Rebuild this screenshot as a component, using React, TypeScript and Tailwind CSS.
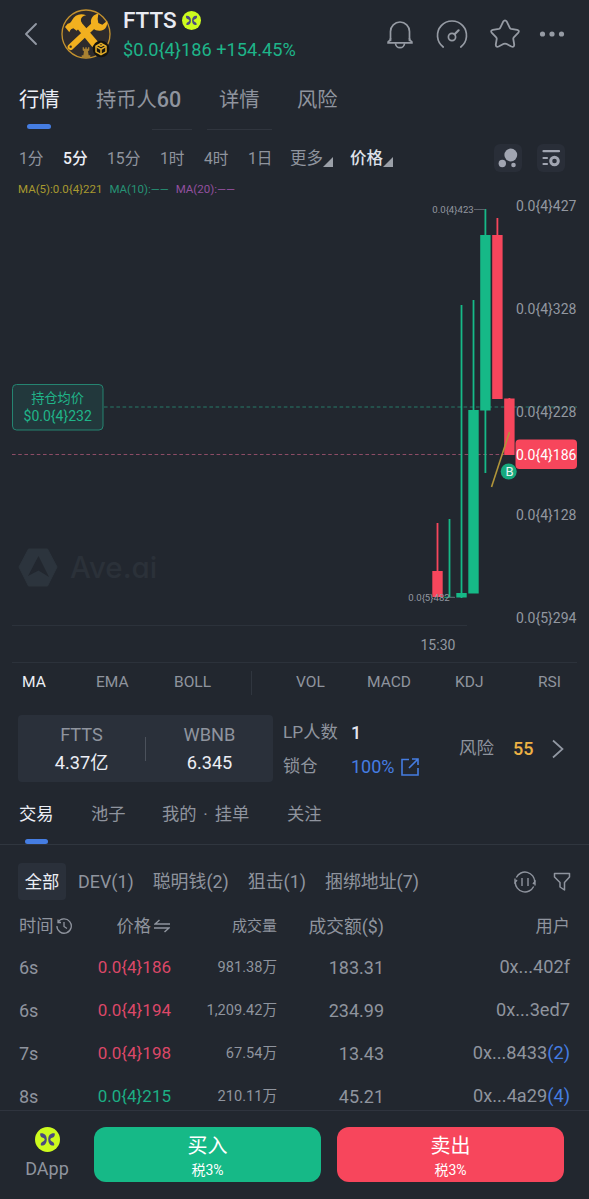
import { useState } from "react"
import clsx from "clsx"

const mainTabs = [
  { label: "行情", className: "w-[77px]" },
  { label: "持币人", count: 60, className: "w-[123px]" },
  { label: "详情", className: "w-[78px]" },
  { label: "风险", className: "w-[60px]" },
]

const intervals = [
  { label: "1分", className: "w-11" },
  { label: "5分", className: "w-11" },
  { label: "15分", className: "w-[53px]" },
  { label: "1时", className: "w-11" },
  { label: "4时", className: "w-11" },
  { label: "1日", className: "w-[42px]" },
]

const candles = [
  { x: 437.5, high: 523, low: 597, top: 571, bottom: 597, up: false },
  { x: 449.5, high: 519, low: 597, top: 596.8, bottom: 597.8, up: true },
  { x: 461.5, high: 305, low: 598, top: 593, bottom: 597.5, up: true },
  { x: 473.5, high: 300, low: 593, top: 410, bottom: 593.5, up: true },
  { x: 485.4, high: 209, low: 473, top: 235, bottom: 410.5, up: true },
  { x: 497.4, high: 218, low: 399, top: 235, bottom: 399, up: false },
  { x: 509.4, high: 398, low: 455, top: 398.5, bottom: 455, up: false },
]

const axis = [
  { y: 206, label: "0.0{4}427" },
  { y: 309, label: "0.0{4}328" },
  { y: 412, label: "0.0{4}228" },
  { y: 515, label: "0.0{4}128" },
  { y: 618, label: "0.0{5}294" },
]

const indicators = ["MA", "EMA", "BOLL", "", "VOL", "MACD", "KDJ", "RSI"]

const filters = ["DEV(1)", "聪明钱(2)", "狙击(1)", "捆绑地址(7)"]

const trades = [
  { time: "6s", price: "0.0{4}186", up: false, volume: "981.38万", amount: "183.31", user: "0x...402f" },
  { time: "6s", price: "0.0{4}194", up: false, volume: "1,209.42万", amount: "234.99", user: "0x...3ed7" },
  { time: "7s", price: "0.0{4}198", up: false, volume: "67.54万", amount: "13.43", user: "0x...8433", tag: "(2)" },
  { time: "8s", price: "0.0{4}215", up: true, volume: "210.11万", amount: "45.21", user: "0x...4a29", tag: "(4)" },
]

function Butterfly({ className }: { className?: string }) {
  return (
    <svg viewBox="0 0 24 24" className={className}>
      <circle cx="12" cy="12" r="12" fill="#cdfb1e" />
      <g fill="#4b4a80">
        <path d="M5 6.2c3.600-.6 6.300 1.600 6.300 5.800s-2.700 6.400-5.600 5.700c-.6-1.600.1-3 2-3.900 1-.5 1.600-1.100 1.600-1.800s-.7-1.300-1.800-1.600C5.600 9.800 4.700 8.300 5 6.200z" />
        <path d="M19 6.200c-3.600-.6-6.300 1.600-6.300 5.800s2.700 6.400 5.600 5.700c.6-1.600-.1-3-2-3.900-1-.5-1.600-1.100-1.600-1.800s.7-1.300 1.800-1.600c1.900-.6 2.800-2.100 2.500-4.200z" />
      </g>
    </svg>
  )
}

function TokenLogo() {
  return (
    <svg viewBox="0 0 150 150" className="h-[50px] w-[50px]">
      <circle cx="75" cy="75" r="72" fill="#2e2b2c" stroke="#c4922f" strokeWidth="4" />
      {/* wrench */}
      <path d="M29 114 L98 49" stroke="#f2b01f" strokeWidth="18" strokeLinecap="round" />
      <path
        d="M112 14c-14 1-24 13-22 27 1 14 11 25 27 24 13 0 23-11 22-30l-15 12-12-5-2-12z"
        fill="#f2b01f"
      />
      <circle cx="29" cy="113" r="3.500" fill="#2e2b2c" />
      {/* hammer */}
      <path d="M42 50 L58 37 L111 98 L94 114 Z" fill="#f2b01f" />
      <path
        d="M12 54l8-10c8-1 10-4 13-10 8-16 24-22 43-15-12 2-17 8-16 17l4 12-17 17-10-7c-5 1-9 4-12 12z"
        fill="#f2b01f"
      />
      {/* rook */}
      <path d="M65 115h4v4h4v-4h4v4h4v-4h4v9l-4 3 2 12h5v7H62v-7h5l2-12-4-3z" fill="#a98132" />
      <circle cx="120" cy="120" r="25" fill="#14130f" />
      <g stroke="#e3ad28" strokeWidth="4.500" fill="none" strokeLinejoin="round">
        <path d="M120 103l15 8.500v17L120 137l-15-8.500v-17z" />
        <path d="M105 112l15 9 15-9M120 121v15M112 107.500l8 4.500 8-4.500" />
      </g>
    </svg>
  )
}

function Header() {
  return (
    <header className="flex h-[68px] items-center pl-6 pr-6">
      <svg viewBox="0 0 14 24" className="h-6 w-[14px]" fill="none" stroke="#9298a3" strokeWidth="1.900">
        <path d="M12 2 2 12l10 10" strokeLinecap="round" strokeLinejoin="round" />
      </svg>
      <div className="ml-[23px]">
        <TokenLogo />
      </div>
      <div className="ml-3 flex flex-col">
        <div className="flex h-[30px] items-center gap-[5px]">
          <span className="text-[22.500px] font-medium text-[#e9ebf3]">FTTS</span>
          <Butterfly className="h-[19px] w-[19px]" />
        </div>
        <div className="flex h-7 items-center pt-[3px] text-[18.200px] text-[#1eb489]">$0.0{"{4}"}186 +154.45%</div>
      </div>
      <div className="ml-auto flex items-center text-[#969ba4]">
        <svg viewBox="0 0 28 30" className="h-[30px] w-7" fill="none" stroke="currentColor" strokeWidth="1.700">
          <path d="M4.500 22.300V12.500a9.500 9.500 0 0 1 19 0v9.800" />
          <path d="M2.200 23.700c-1-1.400 2.300-1.300 2.300-4M25.800 23.700c1-1.400-2.300-1.300-2.300-4M2 23.900h24" strokeLinecap="round" />
          <path d="M9.500 24.200a4.500 4.500 0 0 0 9 0" />
        </svg>
        <svg viewBox="0 0 32 30" className="ml-[22px] h-[30px] w-8" fill="none" stroke="currentColor" strokeWidth="1.700">
          <path d="M7.200 28a14.500 14.500 0 1 1 17.600 0" strokeLinecap="round" />
          <circle cx="16" cy="18" r="3.600" />
          <path d="m18.600 15.300 4-4" strokeWidth="2.200" strokeLinecap="round" />
        </svg>
        <svg viewBox="0 0 30 30" className="ml-[22px] h-[30px] w-[30px]" fill="none" stroke="currentColor" strokeWidth="1.800">
          <path
            d="M13.200 2.600q1.800-2.400 3.600 0l3 6.200q.4.800 1.300 1l6.100 1q2.800.8.900 3l-4.300 4.500q-.7.800-.5 1.800l.9 5.400q.1 3.200-2.800 2l-5.200-2.700q-1.200-.5-2.400 0l-5.200 2.700q-2.900 1.200-2.800-2l.9-5.400q.2-1-.5-1.800L1.900 13.800q-1.900-2.200.9-3l6.100-1q.9-.2 1.300-1z"
            strokeLinejoin="round"
          />
        </svg>
        <svg viewBox="0 0 26 6" className="ml-[19px] h-1.5 w-[26px]" fill="currentColor">
          <circle cx="3.500" cy="3" r="2.600" />
          <circle cx="13" cy="3" r="2.600" />
          <circle cx="22.500" cy="3" r="2.600" />
        </svg>
      </div>
    </header>
  )
}

function Chart() {
  return (
    <svg viewBox="0 198 589 465" className="block h-[465px] w-[589px]">
      {/* watermark */}
      <path d="M28.500 549h19l9.500 18-9.500 19h-19L19 567z" fill="#2c343d" stroke="#2c343d" strokeLinejoin="round" strokeWidth="1" />
      <path d="M38.500 556 49 577l-10.500-6.500L28 576z" fill="#22272f" />
      <text x="70" y="578" fontSize="29.500" fontWeight="500" fill="#2b3139" className="font-['Inter'] [font-feature-settings:'cv11']">
        Ave.ai
      </text>

      <path d="M12 625.500h455M12 662.500h565" stroke="#2c323b" />

      <path d="M104 407h473" stroke="#277a69" strokeDasharray="3.600 2.600" />
      <path d="M12 454.500h492" stroke="#8d4c66" strokeDasharray="3.600 2.600" />

      {candles.map((c) => (
        <g key={c.x} fill={c.up ? "#16b987" : "#f7465c"}>
          <rect x={c.x - 0.9} y={c.high} width="1.800" height={c.low - c.high} />
          <rect x={c.x - 5.200} y={c.top} width="10.400" height={c.bottom - c.top} />
        </g>
      ))}
      <path d="M474 209.500h11M449 597.500h6" stroke="#5c626b" />
      <path d="M491.500 487l18-55" stroke="#b1953a" strokeWidth="1.600" />

      <g fill="#9297a0" fontSize="9.600">
        <text x="432.300" y="213.400">0.0{"{4}"}423</text>
        <text x="408.300" y="601.400">0.0{"{5}"}482</text>
      </g>
      <g fill="#9297a0" fontSize="14">
        {axis.map((a) => (
          <text key={a.label} x="516" y={a.y + 5.400}>{a.label}</text>
        ))}
        <text x="420.500" y="650.200">15:30</text>
      </g>

      <circle cx="508.700" cy="471.500" r="8" fill="#17a97d" />
      <text x="509.500" y="476.200" fontSize="13" textAnchor="middle" fill="#e8f5f1">B</text>
      <rect x="515.500" y="439.500" width="61.500" height="29.500" rx="4" fill="#f7465c" />
      <text x="516" y="460" fontSize="14" fill="#ffffff">0.0{"{4}"}186</text>

      <rect x="12.500" y="384.500" width="90.500" height="45.500" rx="4" fill="#22383c" stroke="#258471" />
      <g fill="#20b489" textAnchor="middle">
        <text x="57.500" y="402.500" fontSize="13.200">持仓均价</text>
        <text x="57.700" y="420.500" fontSize="14">$0.0{"{4}"}232</text>
      </g>
    </svg>
  )
}

export default function App() {
  const [tab, setTab] = useState("行情")
  const [interval, setInterval] = useState("5分")
  const [indicator, setIndicator] = useState("MA")

  return (
    <div className="flex h-[1199px] w-[589px] flex-col overflow-hidden whitespace-nowrap bg-[#22272f] font-['Roboto','Noto_Sans_CJK_SC',sans-serif] leading-none text-[#8f949e]">
      <Header />

      {/* Main tabs */}
      <nav className="flex h-[62px] pl-[19px] text-[20.300px]">
        {mainTabs.map((t) => (
          <button
            key={t.label}
            onClick={() => setTab(t.label)}
            className={clsx("flex flex-col items-start text-left", t.className, tab === t.label && "text-[#eceef5]")}
          >
            <span className="flex h-[56px] items-center pt-2">
              {t.label}
              {t.count && <span className="text-[21.500px] font-medium">{t.count}</span>}
            </span>
            {tab === t.label && <span className="ml-2 h-[5px] w-6 rounded-full bg-[#457de2]" />}
          </button>
        ))}
      </nav>
      <div className="-mt-px flex h-px gap-[15px] pl-[152px]">
        <span className="w-10 bg-[#30353e]" />
        <span className="w-[65px] bg-[#30353e]" />
      </div>

      {/* Intervals */}
      <div className="flex h-[52px] items-center pl-[19px] pt-1 text-[15.700px]">
        {intervals.map((i) => (
          <button
            key={i.label}
            onClick={() => setInterval(i.label)}
            className={clsx("pt-0.5 text-left", i.className, interval === i.label && "font-medium text-[#eceef5]")}
          >
            {i.label}
          </button>
        ))}
        <button className="flex w-[60px] items-end pt-0.5 text-[16.500px]">
          更多
          <svg viewBox="0 0 10 10" className="h-2.5 w-2.5"><path d="M10 0v10H0z" fill="#9ba0a8" /></svg>
        </button>
        <button className="flex items-end pt-0.5 text-[16.500px] font-medium text-[#dfe2ea]">
          价格
          <svg viewBox="0 0 10 10" className="h-2.5 w-2.5"><path d="M10 0v10H0z" fill="#9ba0a8" /></svg>
        </button>
        <div className="ml-auto mr-6 flex gap-[15px]">
          <span className="flex h-7 w-7 items-center justify-center rounded-md bg-[#292e38]">
            <svg viewBox="0 0 20 20" className="h-5 w-5" fill="#a1a5b1">
              <circle cx="12.800" cy="7" r="6.400" />
              <circle cx="4.300" cy="15.500" r="3.700" />
              <circle cx="15.500" cy="17" r="2.300" />
            </svg>
          </span>
          <span className="flex h-7 w-7 items-center justify-center rounded-md bg-[#292e38]">
            <svg viewBox="0 0 20 20" className="h-5 w-5" fill="none" stroke="#a1a5b1" strokeWidth="2.200" strokeLinecap="round">
              <path d="M2.500 3.200h15.500M2.500 10h3.500M2.500 16h3.500" />
              <circle cx="13.500" cy="13" r="3.800" strokeWidth="3" />
            </svg>
          </span>
        </div>
      </div>

      <div className="flex h-4 items-center gap-[7px] pl-[18px] text-[11.500px]">
        <span className="text-[#a8992f]">MA(5):0.0{"{4}"}221</span>
        <span className="text-[#269375]">MA(10):——</span>
        <span className="text-[#93509f]">MA(20):——</span>
      </div>

      <Chart />

      {/* Indicators */}
      <div className="grid h-10 grid-cols-[74px_78px_77px_45px_71px_88px_83px_30px] items-center pl-[22px] text-[15.500px]">
        {indicators.map((name) =>
          name ? (
            <button
              key={name}
              onClick={() => setIndicator(name)}
              className={clsx("text-left", indicator === name && "text-[#eceef5]")}
            >
              {name}
            </button>
          ) : (
            <span key="divider" className="h-6 w-px bg-[#30363f]" />
          )
        )}
      </div>

      {/* Pool */}
      <section className="mt-3 flex h-[67px] pl-[18px]">
        <div className="flex w-[255px] items-center rounded bg-[#2a303a] text-[18.200px]">
          <div className="flex w-[127px] flex-col items-center gap-[9px] pt-px">
            <span>FTTS</span>
            <span className="text-[#eceef5]">4.37亿</span>
          </div>
          <span className="h-6 w-px bg-[#4b515b]" />
          <div className="flex flex-1 flex-col items-center gap-[9px] pt-px">
            <span>WBNB</span>
            <span className="text-[#eceef5]">6.345</span>
          </div>
        </div>
        <div className="ml-2.5 grid w-44 grid-cols-[68px_1fr] grid-rows-[33px_35px] items-center pt-px text-[17.300px]">
          <span>LP人数</span>
          <span className="text-[18px] font-medium text-[#e4e6ee]">1</span>
          <span>锁仓</span>
          <span className="flex items-center gap-1.5 text-[18px] text-[#457de2]">
            100%
            <svg viewBox="0 0 18 18" className="h-[18px] w-[18px]" fill="none" stroke="currentColor" strokeWidth="1.600">
              <path d="M8 1.500H1v15.500h16V10M11 1h6v6M17 1 8 10" />
            </svg>
          </span>
        </div>
        <div className="flex flex-1 items-center pt-px text-[17.500px]">
          <span>风险</span>
          <span className="ml-[19px] text-[18px] font-medium text-[#eeb244]">55</span>
          <svg viewBox="0 0 12 20" className="ml-[19px] h-5 w-3" fill="none" stroke="#9298a3" strokeWidth="1.700">
            <path d="M1 1.500 10.500 10 1 18.500" />
          </svg>
        </div>
      </section>

      {/* Trade tabs */}
      <nav className="flex h-[63px] border-b border-[#30363f] pl-[19px] text-[17.300px]">
        <div className="flex w-[72px] flex-col text-[#eceef5]">
          <span className="flex h-[57px] items-center pt-2">交易</span>
          <span className="ml-1.5 h-[5px] w-[23px] rounded-sm bg-[#457de2]" />
        </div>
        <span className="flex h-[57px] w-[71px] items-center pt-2">池子</span>
        <span className="flex h-[57px] w-[125px] items-center pt-2 [word-spacing:2.500px]">我的 · 挂单</span>
        <span className="flex h-[57px] items-center pt-2">关注</span>
      </nav>

      {/* Filters */}
      <div className="mt-[18px] flex h-[37px] items-center pl-[18px] pr-[18px] text-[17.900px]">
        <span className="flex h-full w-12 items-center justify-center rounded bg-[#2a303a] pt-0.5 text-[17.300px] text-[#eceef5]">全部</span>
        <div className="ml-3 flex gap-[19px] pt-px">
          {filters.map((f) => (
            <span key={f}>{f}</span>
          ))}
        </div>
        <svg viewBox="0 0 22 22" className="ml-auto h-[22px] w-[22px]" fill="none" stroke="currentColor" strokeWidth="1.400">
          <path d="M2.300 6.500A9.700 9.700 0 0 1 20.700 11M19.700 15.500A9.700 9.700 0 0 1 1.300 11" />
          <path d="M1 7.500v4l2-2.500M21 14.500v-4l-2 2.500" />
          <path d="M8 7v8M14 7v8" />
        </svg>
        <svg viewBox="0 0 18 20" className="ml-[17px] h-5 w-[18px]" fill="none" stroke="currentColor" strokeWidth="1.500" strokeLinejoin="round">
          <path d="M1.500 1.500h15v3.500l-5 5.500V18l-4.500-3v-4.500L1.500 5z" />
        </svg>
      </div>

      {/* Trades */}
      <div className="mt-1 grid h-[42px] grid-cols-[72px_80px_106px_107px_186px] items-center pl-[19px] pt-[3px] text-[17.300px]">
        <span className="flex items-center gap-0.5">
          时间
          <svg viewBox="0 0 16 16" className="h-4 w-4" fill="none" stroke="currentColor" strokeWidth="1.300">
            <path d="M2 4.200A7.200 7.200 0 1 1 .9 8M2 1.500v3h3M8 4v4.500l3 2" />
          </svg>
        </span>
        <span className="flex items-center justify-end gap-[3px] pr-px">
          价格
          <svg viewBox="0 0 16 14" className="h-3.5 w-4" fill="none" stroke="currentColor" strokeWidth="1.500">
            <path d="M5.500 1 1 5h15M0 9h15l-4.500 4" />
          </svg>
        </span>
        <span className="text-right text-[15px]">成交量</span>
        <span className="text-right text-[17.800px]">成交额($)</span>
        <span className="text-right">用户</span>
      </div>
      <div className="h-[164px] overflow-hidden">
        {trades.map((t) => (
          <div key={t.price} className="grid h-[43px] grid-cols-[72px_80px_106px_107px_186px] items-center pl-[19px] text-[18px]">
            <span>{t.time}</span>
            <span className={clsx("text-right text-[17px]", t.up ? "text-[#1cae84]" : "text-[#dc4868]")}>{t.price}</span>
            <span className="text-right text-[14.600px]">{t.volume}</span>
            <span className="text-right">{t.amount}</span>
            <span className="text-right text-[18.200px]">
              {t.user}
              {t.tag && <span className="text-[#457de2]">{t.tag}</span>}
            </span>
          </div>
        ))}
      </div>

      {/* Bottom bar */}
      <footer className="flex flex-1 border-t border-[#2f343e] pr-[25px] pt-4">
        <div className="flex w-[94px] flex-col items-center">
          <Butterfly className="h-[25px] w-[25px]" />
          <span className="mt-2 text-[18px]">DApp</span>
        </div>
        <div className="grid h-[55px] flex-1 grid-cols-2 gap-4 text-white">
          <button className="flex flex-col items-center justify-center gap-[7px] rounded-xl bg-[#16b987] pt-[3px]">
            <span className="text-[20px]">买入</span>
            <span className="text-[14px]">税3%</span>
          </button>
          <button className="flex flex-col items-center justify-center gap-[7px] rounded-xl bg-[#f7465c] pt-[3px]">
            <span className="text-[20px]">卖出</span>
            <span className="text-[14px]">税3%</span>
          </button>
        </div>
      </footer>
    </div>
  )
}
